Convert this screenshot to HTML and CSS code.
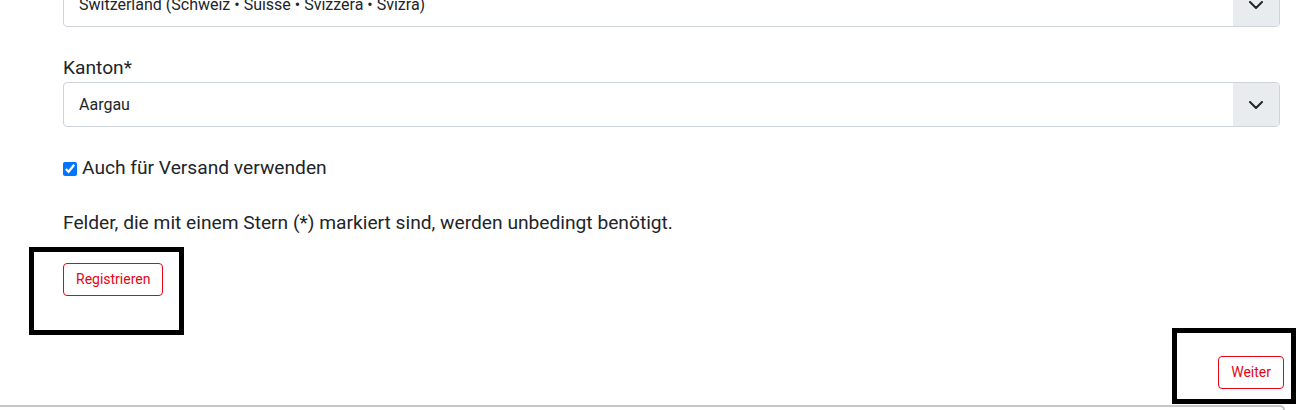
FILE: index.html
```html
<!DOCTYPE html>
<html lang="de">
<head>
    <meta charset="UTF-8">
    <meta name="viewport" content="width=device-width, initial-scale=1.0">
    <title>Registrierung</title>
    <link rel="stylesheet" href="styles.css">
</head>
<body>
    <!-- Address form -->
    <form class="address-form">
        <!-- Country -->
        <div class="select-group">
            <select class="form-select">
                <option selected>Switzerland (Schweiz • Suisse • Svizzera • Svizra)</option>
            </select>
            <span class="select-addon">
                <svg width="14" height="8" viewBox="0 0 14 8"><path d="M1 1l6 6 6-6" fill="none" stroke="#212529" stroke-width="2" stroke-linecap="round" stroke-linejoin="round"/></svg>
            </span>
        </div>

        <!-- Canton -->
        <label class="form-label" for="canton">Kanton*</label>
        <div class="select-group">
            <select class="form-select" id="canton">
                <option selected>Aargau</option>
            </select>
            <span class="select-addon">
                <svg width="14" height="8" viewBox="0 0 14 8"><path d="M1 1l6 6 6-6" fill="none" stroke="#212529" stroke-width="2" stroke-linecap="round" stroke-linejoin="round"/></svg>
            </span>
        </div>

        <!-- Shipping -->
        <label class="form-check">
            <input type="checkbox" class="form-check-input" checked>
            <span>Auch für Versand verwenden</span>
        </label>

        <p class="form-note">Felder, die mit einem Stern (*) markiert sind, werden unbedingt benötigt.</p>

        <!-- Actions -->
        <div class="highlight highlight-register">
            <button type="button" class="btn-outline">Registrieren</button>
        </div>
        <div class="next-row">
            <div class="highlight highlight-next">
                <button type="button" class="btn-outline">Weiter</button>
            </div>
        </div>
    </form>

    <!-- Next card -->
    <div class="card-edge"></div>
</body>
</html>
```

FILE: styles.css
```css
/* Page */
body {
    margin: 0;
    font-family: Roboto, "Liberation Sans", sans-serif;
    color: #212529;
    background-color: #fff;
    overflow: hidden;
}

/* Form column */
.address-form {
    margin-top: -18px;
    padding: 0 19px 0 63px;
}

/* Select with addon */
.select-group {
    display: flex;
    height: 45px;
    box-sizing: border-box;
    border: 1px solid #ced4da;
    border-radius: 4px;
    overflow: hidden;
}

.form-select {
    flex: 1;
    appearance: none;
    border: none;
    outline: none;
    background: transparent;
    padding: 0 15px;
    font-family: inherit;
    font-size: 16px;
    color: #212529;
}

.select-addon {
    display: flex;
    align-items: center;
    justify-content: center;
    width: 46px;
    background-color: #e9ecef;
}

/* Labels */
.form-label {
    display: block;
    margin-top: 27px;
    font-size: 19.2px;
    line-height: 28px;
}

/* Checkbox */
.form-check {
    display: flex;
    align-items: center;
    margin-top: 27px;
    font-size: 19.2px;
    line-height: 28px;
}

.form-check-input {
    width: 14px;
    height: 14px;
    margin: 2px 5px 0 0;
}

/* Required note */
.form-note {
    margin: 27px 0 0;
    font-size: 19.2px;
    line-height: 28px;
}

/* Buttons */
.btn-outline {
    display: block;
    height: 33px;
    padding: 0 12px;
    border: 1px solid #e30613;
    border-radius: 4px;
    background-color: #fff;
    color: #e30613;
    font-family: inherit;
    font-size: 14px;
    line-height: 21px;
    cursor: pointer;
}

/* Highlight frames */
.highlight {
    box-sizing: border-box;
    border: 5px solid #000;
}

.highlight-register {
    width: 155px;
    height: 88px;
    margin: 10px 0 0 -34px;
    padding: 11px 0 0 29px;
}

.next-row {
    display: flex;
    justify-content: flex-end;
    margin: -7px -16px 0 0;
}

.highlight-next {
    display: flex;
    justify-content: flex-end;
    width: 124px;
    height: 76px;
    padding: 23px 7px 0 0;
}

/* Top edge of the card below */
.card-edge {
    width: 1285px;
    height: 12px;
    margin-top: 1px;
    box-sizing: border-box;
    border-top: 2px solid #c6c6c6;
    border-right: 2px solid #c6c6c6;
    border-top-right-radius: 5px;
}
```
